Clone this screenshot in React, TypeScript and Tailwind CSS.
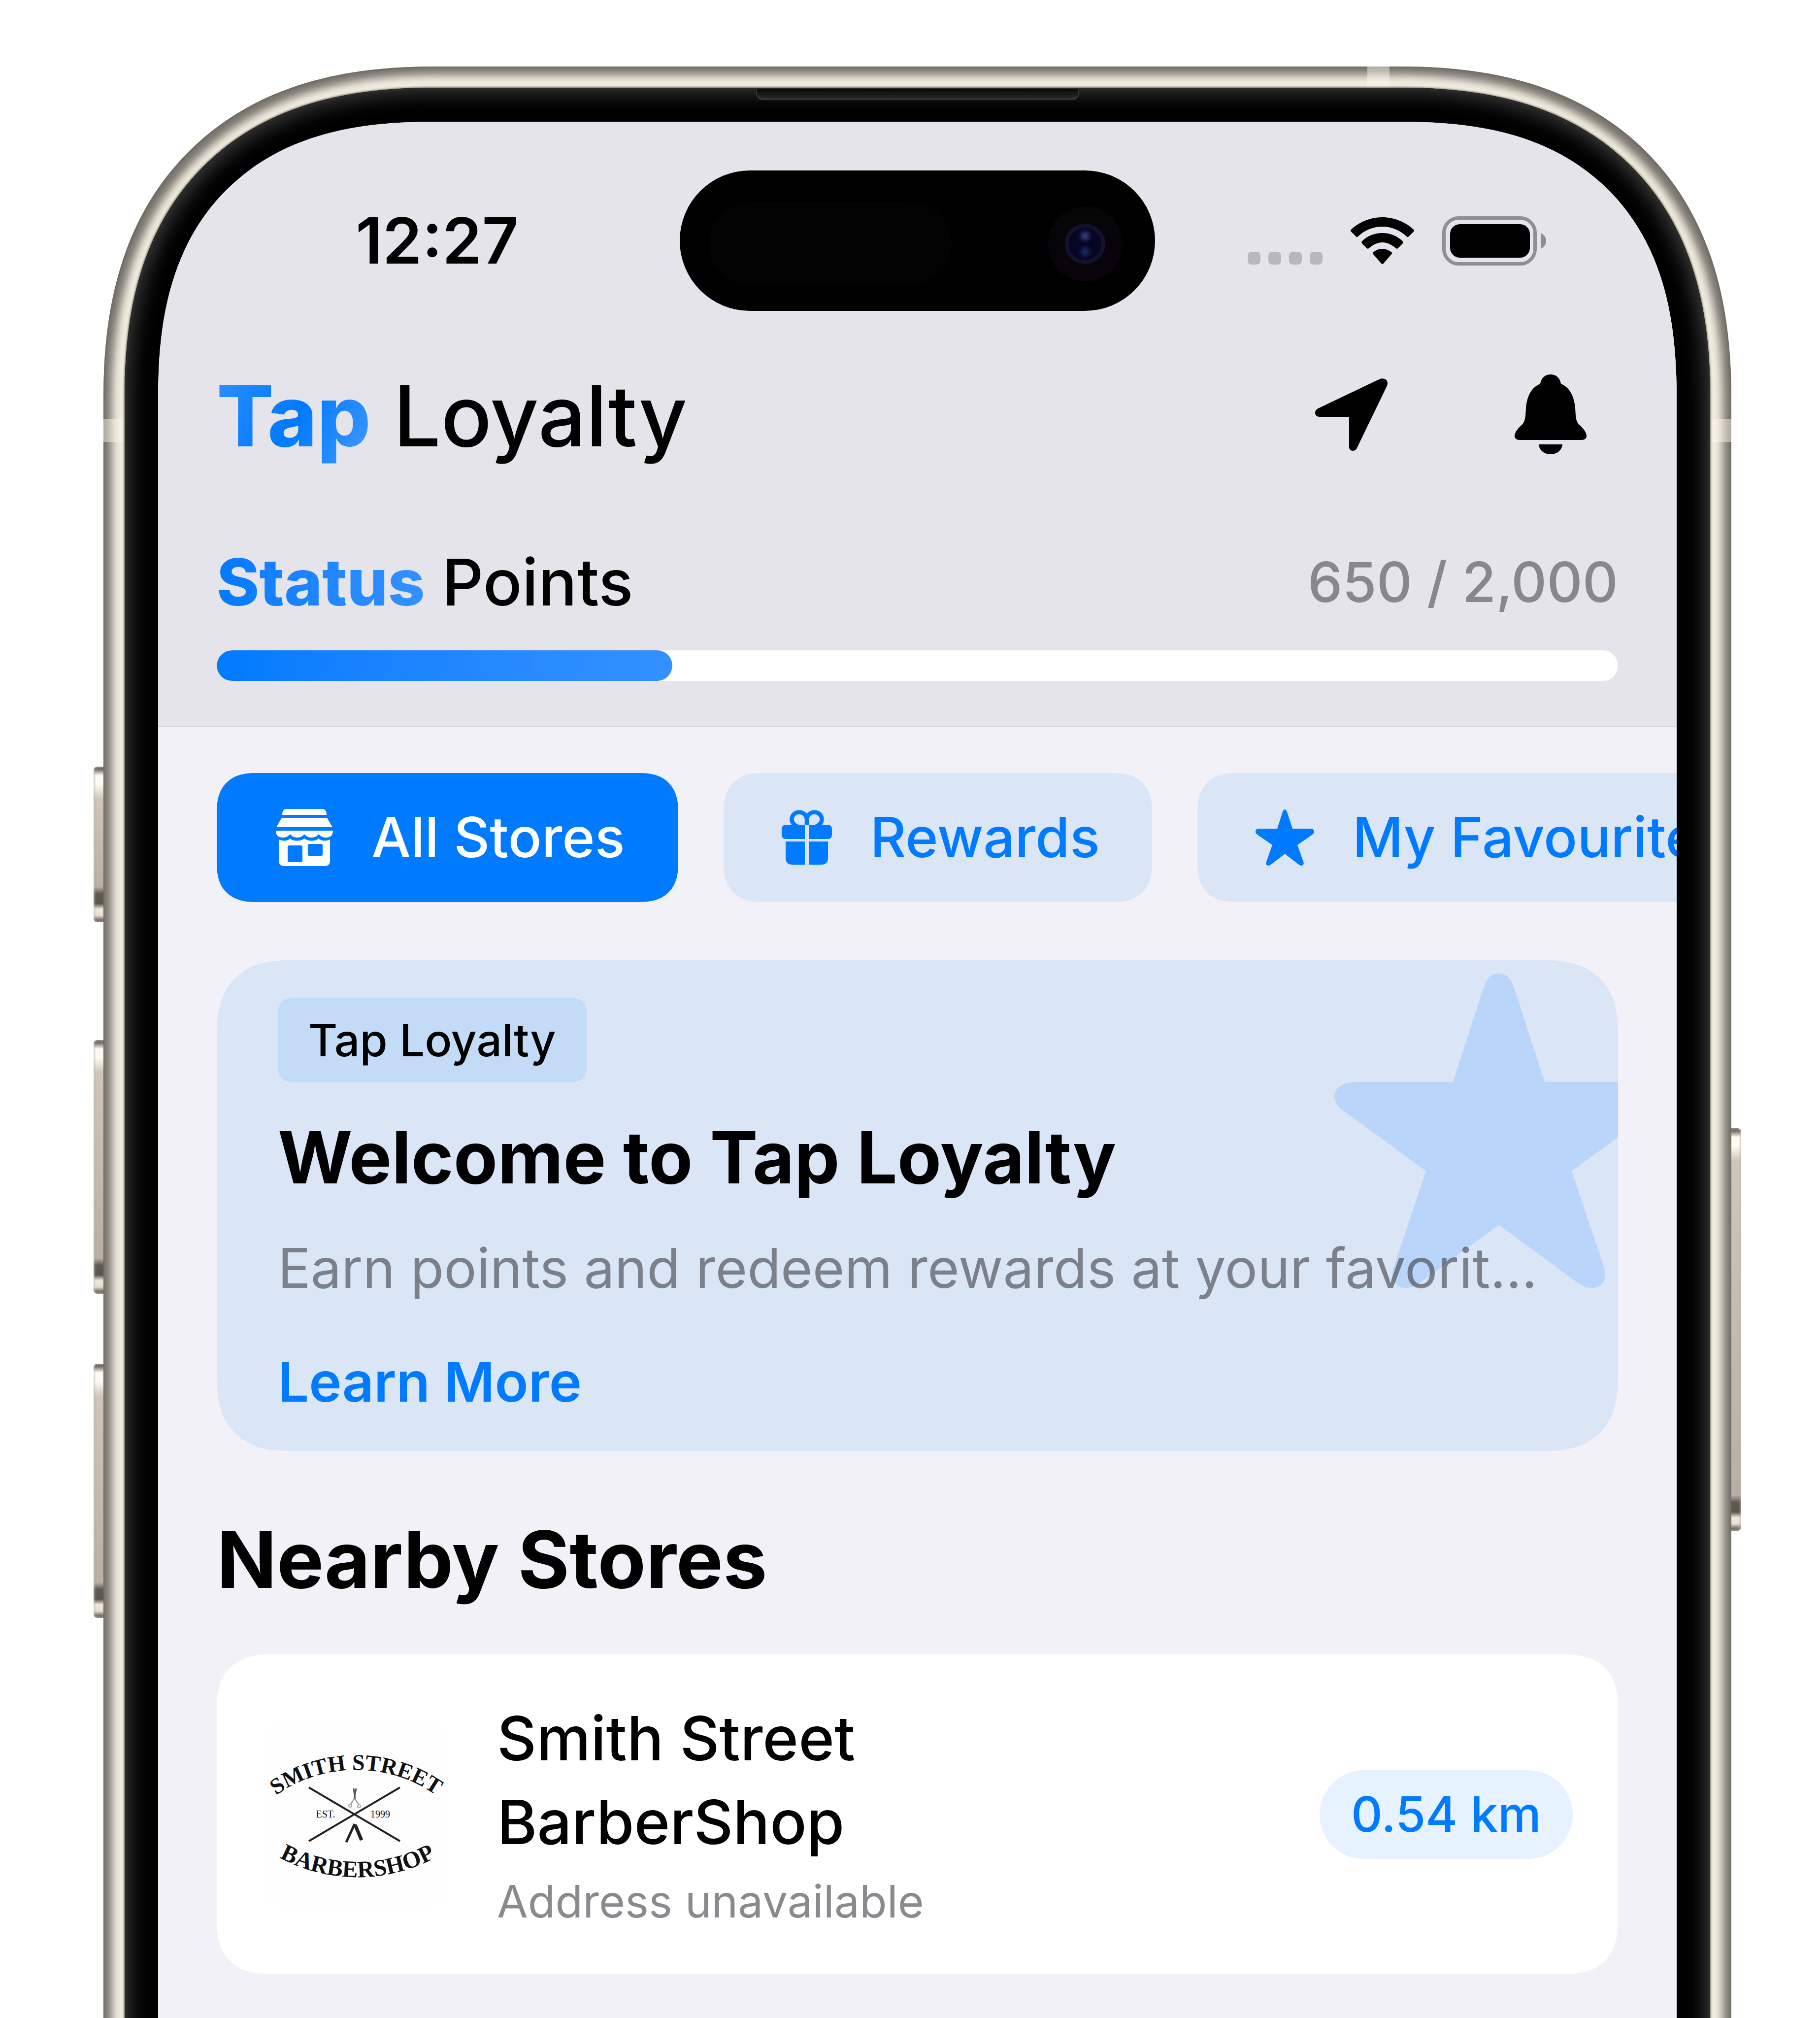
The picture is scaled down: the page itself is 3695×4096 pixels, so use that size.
import type { ReactNode } from "react";

function StarBig({ className }: { className?: string }) {
  return (
    <svg viewBox="0 0 668 638" className={className} fill="currentColor" aria-hidden="true">
      <path d="M334 0C349 0 359 10 366 32L427 220L620 220C654 220 668 234 668 250C668 263 659 272 646 281L482 401L548 598C556 626 540 638 523 638C510 638 500 632 489 624L334 510L179 624C168 632 158 638 145 638C128 638 112 626 120 598L186 401L22 281C9 272 0 263 0 250C0 234 14 220 48 220L241 220L302 32C309 10 319 0 334 0Z" />
    </svg>
  );
}

function StarSmall() {
  return (
    <svg viewBox="0 0 119 114" className="h-[114px] w-[119px]" fill="currentColor" aria-hidden="true">
      <path d="M59.500 0C61.500 0 63 2 64 5L75 39L112 39C116 39 119 41 119 45C119 48 117 50 114 52L85 72L97 106C98 109 98 112 96 113C94 114.500 91 114 88 112L59.500 90L31 112C28 114 25 114.500 23 113C21 112 21 109 22 106L34 72L5 52C2 50 0 48 0 45C0 41 3 39 7 39L44 39L55 5C56 2 57.500 0 59.500 0Z" />
    </svg>
  );
}

function StoreIcon() {
  return (
    <svg viewBox="0 0 116 116" className="h-[116px] w-[116px]" fill="currentColor" aria-hidden="true">
      <path d="M22 0H94C100 0 103 4 103 12H13C13 4 16 0 22 0Z" />
      <path d="M12 18H104L115 37H1Z" />
      <path d="M0 44H116C116 53 111 58 102 58C95 58 90 55 87 51C84 55 79 58 72.500 58C66 58 61 55 58 51C55 55 50 58 43.500 58C37 58 32 55 29 51C26 55 21 58 14 58C5 58 0 53 0 44Z" />
      <path
        fillRule="evenodd"
        d="M6 62C15 66 24 65 29 60C36 66 50 66 58 60C66 66 80 66 87 60C92 65 101 66 110 62V105C110 112 106 116 99 116H17C10 116 6 112 6 105ZM27 74Q24 74 24 77V108H54V77Q54 74 51 74ZM68 71Q65 71 65 74V92Q65 95 68 95H92Q95 95 95 92V74Q95 71 92 71Z"
      />
    </svg>
  );
}

function GiftIcon() {
  return (
    <svg viewBox="0 0 102 112" className="h-[112px] w-[102px]" fill="currentColor" aria-hidden="true">
      <path
        d="M51 30V20C51 11 44 4.500 35.500 4.500C27 4.500 20.500 11 20.500 19.500C20.500 25 25 31 33 34M51 30V20C51 11 58 4.500 66.500 4.500C75 4.500 81.500 11 81.500 19.500C81.500 25 77 31 69 34"
        fill="none"
        stroke="currentColor"
        strokeWidth="8.5"
      />
      <path d="M9 30H47V59H9Q0 59 0 50V39Q0 30 9 30Z" />
      <path d="M55 30H93Q102 30 102 39V50Q102 59 93 59H55Z" />
      <path d="M8 64H47V111H22Q8 111 8 97Z" />
      <path d="M55 64H94V97Q94 111 80 111H55Z" />
    </svg>
  );
}

function ArrowIcon() {
  return (
    <svg viewBox="0 0 147 147" className="h-[147px] w-[147px]" fill="currentColor" aria-hidden="true">
      <path d="M132 1C141 -2 150 4 146 15L86 139C84 144 81 147 77 147C72 147 69 144 69 139V78H9C4 78 0 75 0 70C0 66 2 63 6 61Z" />
    </svg>
  );
}

function BellIcon() {
  return (
    <svg viewBox="0 0 146 162" className="h-[162px] w-[146px]" fill="currentColor" aria-hidden="true">
      <path d="M73 0C84 0 92 7 94 19C112 26 121 45 123 68C124 84 124 94 130 101C138 108 146 117 146 125C146 130 142 133 136 133H10C4 133 0 130 0 125C0 117 8 108 16 101C22 94 22 84 23 68C25 45 34 26 52 19C54 7 62 0 73 0Z" />
      <path d="M49 142H97C96 154 86 162 73 162C60 162 50 154 49 142Z" />
    </svg>
  );
}

function WifiIcon() {
  return (
    <svg viewBox="0 0 129 95" className="h-[95px] w-[129px]" fill="currentColor" aria-hidden="true">
      <path d="M64.500 0C89 0 112 10 128 25C129.500 27 129.500 28 128 29L118 39C117 40.500 115 40.500 114 39C100 26 83 19 64.500 19C46 19 29 26 15 39C14 40.500 12 40.500 11 39L1 29C-.5 28 -.5 27 1 25C17 10 40 0 64.500 0Z" />
      <path d="M64.500 32C81 32 95 38 106 49C107 50 107 51 106 53L96 63C95 64 93 64 92 63C84 56 75 51 64.500 51C54 51 45 56 37 63C36 64 34 64 33 63L23 53C22 51 22 50 23 49C34 38 48 32 64.500 32Z" />
      <path d="M64.500 64C72 64 78 67 83 71C84.500 72 84.500 74 83 75L66.500 94C65.500 95.500 63.500 95.500 62.500 94L46 75C44.500 74 44.500 72 46 71C51 67 57 64 64.500 64Z" />
    </svg>
  );
}

function BatteryIcon() {
  return (
    <svg viewBox="0 0 212 100" className="h-[100px] w-[212px]" aria-hidden="true">
      <rect x="3.500" y="3.500" width="185" height="93" rx="30" fill="none" stroke="#8f8f92" strokeWidth="7" />
      <rect x="16" y="16" width="162" height="68" rx="20" fill="#000" />
      <path d="M200 34C207 37 211 43 211 50C211 57 207 63 200 66Z" fill="#8f8f92" />
    </svg>
  );
}

function BarberLogo() {
  return (
    <svg viewBox="0 0 378 378" className="size-[378px] shrink-0" role="img" aria-label="Smith Street Barbershop logo">
      <defs>
        <path id="arc-top" d="M6 166A282 282 0 0 1 372 166" />
        <path id="arc-bottom" d="M9 262A336 336 0 0 0 375 262" />
      </defs>
      <rect width="378" height="378" rx="50" fill="#fefefe" />
      <g fill="#111" fontFamily="'Liberation Serif', serif" fontWeight="700">
        <text fontSize="46" textAnchor="middle">
          <textPath href="#arc-top" startOffset="50%">
            SMITH STREET
          </textPath>
        </text>
        <text fontSize="48" textAnchor="middle">
          <textPath href="#arc-bottom" startOffset="50%">
            BARBERSHOP
          </textPath>
        </text>
        <text x="127" y="195" fontSize="20" fontWeight="400" textAnchor="middle">
          EST.
        </text>
        <text x="238" y="195" fontSize="20" fontWeight="400" textAnchor="middle">
          1999
        </text>
      </g>
      <g stroke="#222" strokeWidth="4" fill="none">
        <path d="M93 134L278 243M278 134L93 243" />
        <path d="M186 208L169 245" strokeWidth="5" />
        <path d="M187 210L200 241" strokeWidth="7" />
        <path d="M184 136L187 158M189 136L185 158" stroke="#555" strokeWidth="3" />
        <path d="M186 156L178 168M186 156L194 168" stroke="#888" strokeWidth="2" />
        <circle cx="177" cy="171" r="3" stroke="#aaa" strokeWidth="2" />
        <circle cx="195" cy="172" r="3" stroke="#aaa" strokeWidth="2" />
      </g>
    </svg>
  );
}

function Tab({ icon, label, active }: { icon: ReactNode; label: string; active?: boolean }) {
  return (
    <button
      type="button"
      aria-pressed={active ? true : false}
      className={
        active
          ? "flex h-[262px] shrink-0 items-center gap-[78px] rounded-[80px] bg-[#007aff] pr-[108px] pl-[120px] text-[113px] font-medium whitespace-nowrap text-white [corner-shape:superellipse(1.3)]"
          : "flex h-[262px] shrink-0 items-center gap-[78px] rounded-[80px] bg-[#dae5f6] pr-[106px] pl-[118px] text-[113px] font-medium whitespace-nowrap text-[#007aff] [corner-shape:superellipse(1.3)]"
      }
    >
      {icon}
      {label}
    </button>
  );
}

function SideKey({ className }: { className: string }) {
  return (
    <div
      className={`absolute w-[24px] bg-[linear-gradient(to_bottom,#5d5850_0,#6d6860_5px,#fffbf2_18px,#fffbf2_36px,#cfc6bb_66px,#b8afa5_calc(100%-72px),#5f5a52_calc(100%-58px),#5a554d_calc(100%-38px),#f0e8dc_calc(100%-27px),#e6ded2_calc(100%-14px),#6b665e_calc(100%-4px),#6b665e_100%)] shadow-[inset_0_0_3px_3px_#b9b6ac88] ${className}`}
    />
  );
}

export default function App() {
  const points = 650;
  const goal = 2000;
  return (
    <div className="flex min-h-screen flex-col overflow-hidden bg-white pt-[135px] pr-[180px] pl-[210px] font-[Inter,sans-serif] text-black">
      <div className="relative -mb-[160px] flex flex-1 flex-col">
        <SideKey className="top-[1421px] -left-[20px] h-[316px] rounded-l-[8px]" />
        <SideKey className="top-[1976px] -left-[20px] h-[515px] rounded-l-[8px]" />
        <SideKey className="top-[2633px] -left-[20px] h-[516px] rounded-l-[8px]" />
        <SideKey className="top-[2155px] -right-[20px] h-[817px] rounded-r-[8px]" />

        <div className="relative flex flex-1 flex-col rounded-t-[676px] bg-[#f3ede1] p-[43px] shadow-[inset_0_0_5px_1px_#68635b,inset_0_0_18px_17px_#78736c] [corner-shape:superellipse(1.23)]">
          <div className="absolute top-0 right-[694px] h-[43px] w-[45px] bg-[#fff8ee]/45" />
          <div className="absolute top-[715px] left-0 h-[47px] w-[43px] bg-[#fff8ee]/45" />
          <div className="absolute top-[715px] right-0 h-[47px] w-[43px] bg-[#fff8ee]/45" />

          <div className="relative flex flex-1 flex-col rounded-t-[633px] bg-black px-[68px] pt-[69px] shadow-[0_0_4px_1px_#6b6a5e,inset_0_0_0_4px_#2a2a26,inset_0_0_38px_12px_#363636] [corner-shape:superellipse(1.25)]">
            <div className="absolute top-[3px] left-1/2 h-[22px] w-[656px] -translate-x-1/2 rounded-b-[14px] border-x-2 border-b-4 border-[#333333] bg-linear-to-b from-[#0b0b0b] to-[#262626]" />

            <main className="flex flex-1 flex-col overflow-hidden rounded-t-[565px] bg-[#f2f1f7] [corner-shape:superellipse(1.3)]">
              <header className="border-b-[3px] border-[#d3d3d8] bg-[#e5e4ea] px-[119px] pt-[99px] pb-[91px]">
                <div className="flex h-[285px] items-center justify-between">
                  <time className="w-[940px] pl-[282px] text-[129px] leading-none font-semibold">12:27</time>
                  <div className="flex h-[285px] w-[965px] items-center justify-between rounded-full bg-black pt-[12px] pr-[66px] pl-[60px]">
                    <div className="h-[168px] w-[492px] rounded-full bg-[#030303]" />
                    <div className="flex size-[152px] items-center justify-center rounded-full bg-linear-to-b from-[#050506] to-[#0a040c]">
                      <div className="flex size-[82px] flex-col items-center justify-center gap-[14px] rounded-full border-[8px] border-[#12122a] bg-[#060624]">
                        <div className="size-[18px] rounded-full bg-[#3a3a80] blur-[4px]" />
                        <div className="size-[18px] rounded-full bg-[#1c2a5c] blur-[4px]" />
                      </div>
                    </div>
                  </div>
                  <div className="flex w-[940px] items-center justify-end gap-[57px] pr-[145px]">
                    <div className="flex gap-[16px] pt-[70px]">
                      {[0, 1, 2, 3].map((i) => (
                        <div key={i} className="h-[26px] w-[26px] rounded-[8px] bg-[#b8b7bc]" />
                      ))}
                    </div>
                    <WifiIcon />
                    <BatteryIcon />
                  </div>
                </div>

                <div className="mt-[120px] flex h-[180px] items-center justify-between pr-[64px]">
                  <h1 className="pt-[4px] text-[171px] leading-none font-medium whitespace-nowrap">
                    <span className="bg-linear-[120deg] from-[#2f8fff] via-[#007aff] via-50% to-[#4a9dfd] bg-clip-text pb-[30px] font-extrabold text-transparent">
                      Tap
                    </span>{" "}
                    Loyalty
                  </h1>
                  <div className="flex items-center gap-[258px]">
                    <button type="button" aria-label="Locate">
                      <ArrowIcon />
                    </button>
                    <button type="button" aria-label="Notifications">
                      <BellIcon />
                    </button>
                  </div>
                </div>

                <div className="mt-[160px] flex h-[180px] items-center justify-between">
                  <h2 className="text-[131px] leading-none font-medium whitespace-nowrap">
                    <span className="bg-linear-to-r from-[#007aff] to-[#3391ff] bg-clip-text pb-[20px] font-extrabold text-transparent">
                      Status
                    </span>{" "}
                    Points
                  </h2>
                  <p className="text-[112px] leading-none font-medium whitespace-nowrap text-[#87878c]">650 / 2,000</p>
                </div>
                <div
                  role="progressbar"
                  aria-label="Status points"
                  aria-valuenow={points}
                  aria-valuemax={goal}
                  className="mt-[49px] h-[62px] overflow-hidden rounded-full bg-white"
                >
                  <div
                    className="h-full rounded-full bg-linear-to-r from-[#007aff] to-[#3391ff]"
                    style={{ width: `${(points / goal) * 100}%` }}
                  />
                </div>
              </header>

              <nav className="flex gap-[92px] pt-[93px] pl-[119px]">
                <Tab icon={<StoreIcon />} label="All Stores" active />
                <Tab icon={<GiftIcon />} label="Rewards" />
                <Tab icon={<StarSmall />} label="My Favourites" />
              </nav>

              <div className="px-[119px]">
                <section className="relative mt-[118px] overflow-hidden rounded-[150px] bg-[#dae5f6] px-[124px] pt-[77px] pb-[71px] [corner-shape:superellipse(1.3)]">
                  <StarBig className="absolute top-[27px] -right-[92px] h-[638px] w-[668px] text-[#b9d5f9]" />
                  <div className="relative">
                    <span className="inline-flex h-[170px] items-center rounded-[26px] bg-[#c4dbf7] px-[62px] text-[91px] leading-none font-medium">
                      Tap Loyalty
                    </span>
                    <h3 className="mt-[58px] text-[146px] leading-[190px] font-bold whitespace-nowrap">
                      Welcome to Tap Loyalty
                    </h3>
                    <p className="mt-[60px] text-[111px] leading-[140px] whitespace-nowrap text-[#3c3c43]/60">
                      Earn points and redeem rewards at your favorit...
                    </p>
                    <a href="#learn" className="mt-[90px] block text-[112px] leading-[140px] font-semibold text-[#007aff]">
                      Learn More
                    </a>
                  </div>
                </section>

                <h2 className="mt-[120px] text-[160px] leading-[200px] font-bold">Nearby Stores</h2>

                <article className="mt-[93px] flex h-[649px] items-center rounded-[110px] bg-white pr-[92px] pl-[94px] [corner-shape:superellipse(1.3)]">
                  <BarberLogo />
                  <div className="ml-[97px] flex-1 pt-[6px]">
                    <h3 className="w-[900px] text-[124px] leading-[170px] font-medium">Smith Street BarberShop</h3>
                    <p className="mt-[6px] text-[91px] leading-[140px] text-[#8a8a8e]">Address unavailable</p>
                  </div>
                  <span className="flex h-[180px] items-center rounded-full bg-[#e6f2ff] px-[64px] text-[99px] leading-none font-medium text-[#007aff]">
                    0.54 km
                  </span>
                </article>
              </div>
            </main>
          </div>
        </div>
      </div>
    </div>
  );
}
